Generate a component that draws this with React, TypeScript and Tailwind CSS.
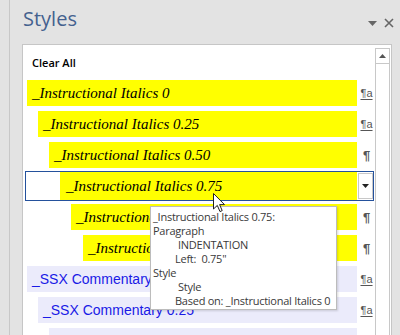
import React from "react";

type Row = {
  label: string;
  indent: string;
  kind: "instr" | "ssx";
  mark: "pa" | "p";
  selected?: boolean;
};

const rows: Row[] = [
  { label: "_Instructional Italics 0", indent: "ml-0", kind: "instr", mark: "pa" },
  { label: "_Instructional Italics 0.25", indent: "ml-[11px]", kind: "instr", mark: "pa" },
  { label: "_Instructional Italics 0.50", indent: "ml-[22px]", kind: "instr", mark: "p" },
  { label: "_Instructional Italics 0.75", indent: "ml-[34px]", kind: "instr", mark: "p", selected: true },
  { label: "_Instructional Italics 1.00", indent: "ml-[44px]", kind: "instr", mark: "p" },
  { label: "_Instructional Italics 1.25", indent: "ml-[56px]", kind: "instr", mark: "p" },
  { label: "_SSX Commentary 0", indent: "ml-0", kind: "ssx", mark: "pa" },
  { label: "_SSX Commentary 0.25", indent: "ml-[11px]", kind: "ssx", mark: "pa" },
  { label: "_SSX Commentary 0.50", indent: "ml-[22px]", kind: "ssx", mark: "pa" },
];

function Mark({ type }: { type: "pa" | "p" }) {
  if (type === "pa") {
    return (
      <span className="text-[11px] leading-none text-[#555] underline underline-offset-2 font-['Liberation_Sans',sans-serif]">
        ¶a
      </span>
    );
  }
  return (
    <span className="text-[13px] leading-none text-[#555] font-bold font-['Liberation_Sans',sans-serif]">¶</span>
  );
}

function StyleRow({ row }: { row: Row }) {
  const fill = row.kind === "instr" ? "bg-[#ffff00]" : "bg-[#ebebfb]";
  const text =
    row.kind === "instr"
      ? "italic text-[15px] text-black font-['Liberation_Serif',serif]"
      : "text-[14px] text-[#1a1ae6] font-['Liberation_Sans',sans-serif]";

  if (row.selected) {
    return (
      <div className="-ml-[2px] mr-[1px] -my-[2px] h-[30px] flex border border-[#24519c] bg-white">
        <div className={`${fill} flex-1 flex items-center ml-[34px] pl-[6px] whitespace-nowrap overflow-hidden`}>
          <span className={text}>{row.label}</span>
        </div>
        <div className="w-[15px] my-[1px] ml-[1px] border border-[#c8c8c8] bg-white flex items-center justify-center">
          <svg width="7" height="4" viewBox="0 0 7 4">
            <path d="M0 0h7L3.5 4z" fill="#222" />
          </svg>
        </div>
      </div>
    );
  }

  return (
    <div className="h-[26px] flex">
      <div className={`${fill} ${row.indent} flex-1 flex items-center pl-[5px] whitespace-nowrap overflow-hidden`}>
        <span className={text}>{row.label}</span>
      </div>
      <div className="w-[18px] flex items-center justify-center pl-[1px]">
        <Mark type={row.mark} />
      </div>
    </div>
  );
}

export default function App() {
  return (
    <div className="w-[400px] h-[335px] overflow-hidden bg-[#e3e3e3] flex relative font-['Open_Sans',sans-serif]">
      <div className="w-[9px] shrink-0" />
      <div className="w-px shrink-0 bg-[#c8c8c8]" />

      <div className="flex-1 flex flex-col pl-[12px] pr-[8px]">
        {/* header */}
        <div className="h-[44px] shrink-0 flex items-start justify-between">
          <h1 className="mt-[9px] ml-[1px] text-[20px] leading-none text-[#44618f]">Styles</h1>
          <div className="flex items-center gap-[7px] mt-[18px] mr-[-2px]">
            <svg width="9" height="5" viewBox="0 0 9 5">
              <path d="M0 0h9L4.5 5z" fill="#666" />
            </svg>
            <svg width="10" height="10" viewBox="0 0 10 10">
              <path d="M1 1l8 8M9 1L1 9" stroke="#666" strokeWidth="1.6" />
            </svg>
          </div>
        </div>

        {/* list box */}
        <div className="flex-1 flex bg-white border border-b-0 border-[#c6c6c6]">
          <div className="flex-1 flex flex-col pl-[4px]">
            <div className="h-[35px] flex items-center pl-[5px] pt-[2px]">
              <span className="text-[11px] font-semibold text-black">Clear All</span>
            </div>
            <div className="flex flex-col gap-[5px]">
              {rows.map((r) => (
                <StyleRow key={r.label} row={r} />
              ))}
            </div>
          </div>
          <div className="w-[15px] mt-[3px] mr-[1px] border border-b-0 border-[#c8c8c8] flex flex-col">
            <div className="h-[15px] border-b border-[#c8c8c8] flex items-center justify-center">
              <svg width="7" height="4" viewBox="0 0 7 4">
                <path d="M3.5 0L7 4H0z" fill="#555" />
              </svg>
            </div>
          </div>
        </div>
      </div>

      {/* tooltip */}
      <div className="absolute left-[150px] top-[206px] w-[187px] h-[104px] bg-white border border-[#bcbcbc] shadow-[1px_1px_2px_rgba(0,0,0,0.15)] px-[2px] pt-[3px] text-[11px] leading-[14px] tracking-[-0.25px] text-[#3a3a3a]">
        <div>_Instructional Italics 0.75:</div>
        <div>Paragraph</div>
        <div className="pl-[25px]">INDENTATION</div>
        <div className="pl-[22px] whitespace-pre">Left:  0.75"</div>
        <div>Style</div>
        <div className="pl-[25px]">Style</div>
        <div className="pl-[22px] whitespace-nowrap">Based on: _Instructional Italics 0</div>
      </div>

      {/* mouse cursor */}
      <svg className="absolute left-[213px] top-[193px]" width="12" height="20" viewBox="0 0 12 20">
        <path d="M0.5 0.5V16L4.3 12.4L7 18.6L9.2 17.6L6.6 11.6H11.5Z" fill="#fff" stroke="#222" strokeWidth="1" strokeLinejoin="round" />
      </svg>
    </div>
  );
}
